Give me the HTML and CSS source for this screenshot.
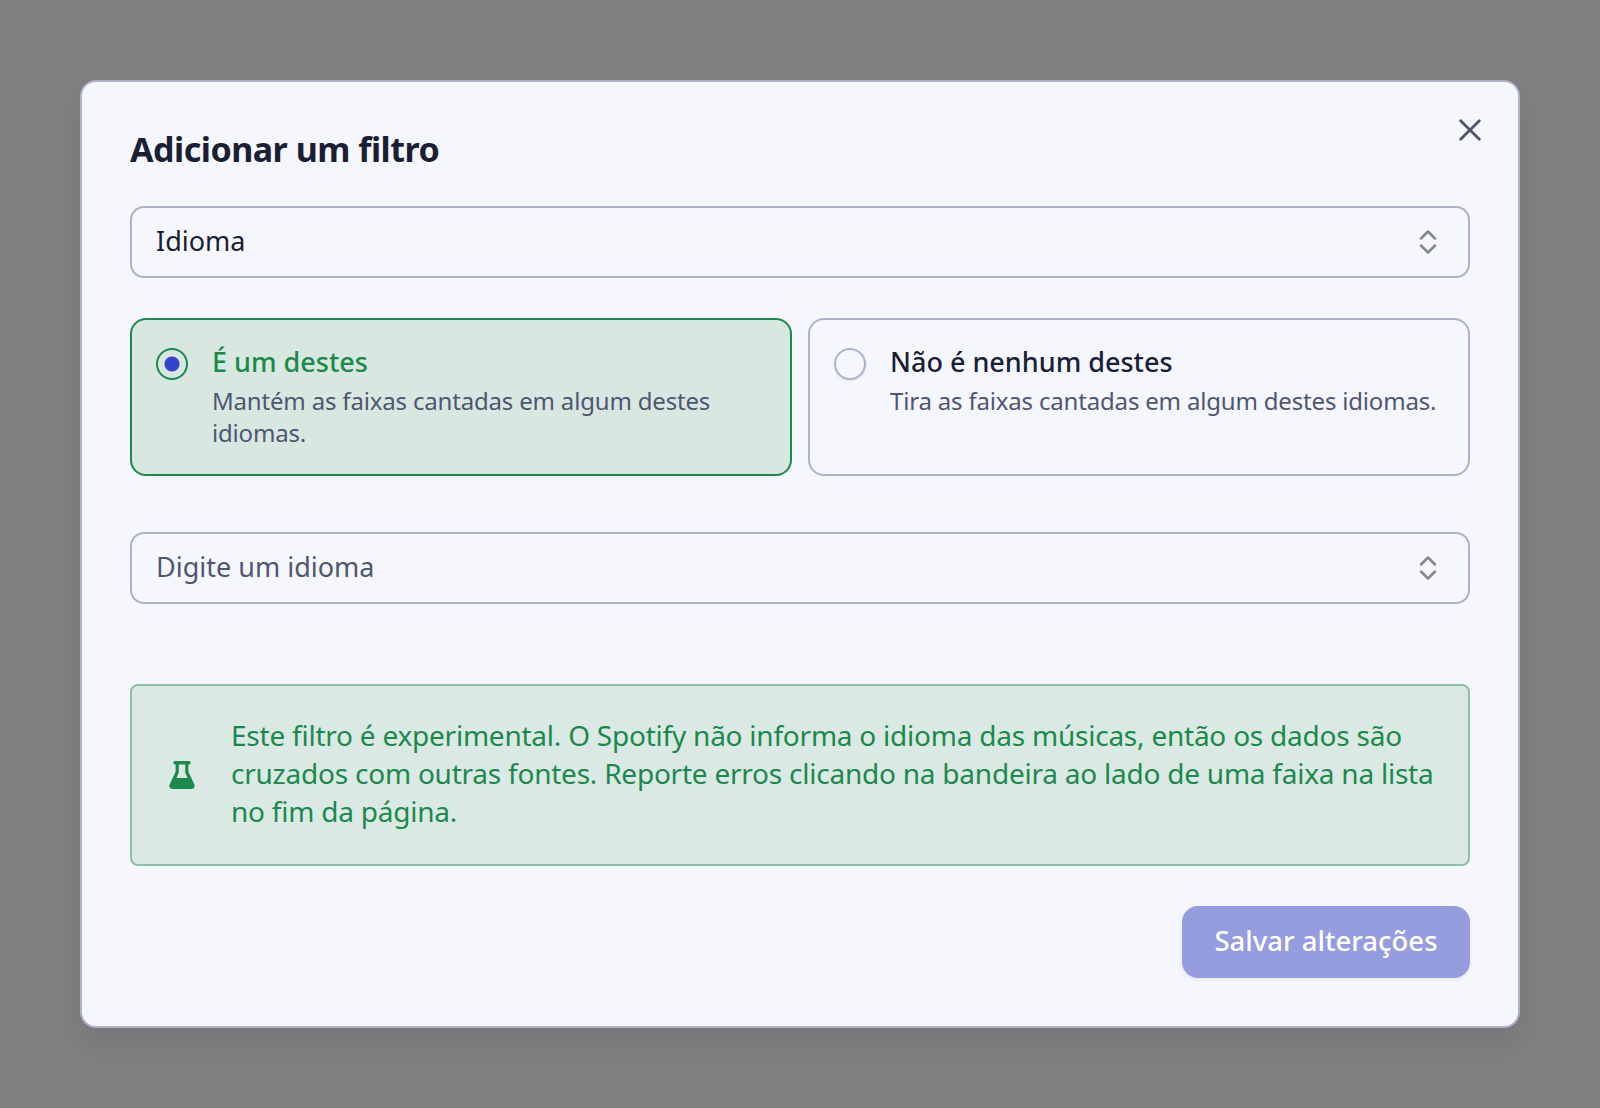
FILE: index.html
```html
<!DOCTYPE html>
<html lang="pt-BR">
<head>
  <meta charset="UTF-8" />
  <title>Adicionar um filtro</title>
  <link rel="stylesheet" href="styles.css">
</head>
<body>
  <div class="modal">
    <button class="fechar" aria-label="Fechar">
      <svg viewBox="0 0 24 24" width="28" height="28" fill="none" stroke="#4f5468" stroke-width="2.4" stroke-linecap="round"><path d="M4 4l16 16M20 4L4 20"/></svg>
    </button>
    <h2>Adicionar um filtro</h2>

    <div class="campo">
      <span>Idioma</span>
      <svg class="setas" viewBox="0 0 18 26" width="18" height="26" fill="none" stroke="#85878f" stroke-width="2.5" stroke-linecap="round" stroke-linejoin="round"><path d="M2 9.500l7-7 7 7M2 16.500l7 7 7-7"/></svg>
    </div>

    <div class="opcoes">
      <div class="opcao ativa">
        <span class="radio"></span>
        <div>
          <div class="opcao-titulo">É um destes</div>
          <div class="opcao-desc">Mantém as faixas cantadas em algum destes idiomas.</div>
        </div>
      </div>
      <div class="opcao">
        <span class="radio"></span>
        <div>
          <div class="opcao-titulo">Não é nenhum destes</div>
          <div class="opcao-desc">Tira as faixas cantadas em algum destes idiomas.</div>
        </div>
      </div>
    </div>

    <div class="campo campo-busca">
      <span>Digite um idioma</span>
      <svg class="setas" viewBox="0 0 18 26" width="18" height="26" fill="none" stroke="#85878f" stroke-width="2.5" stroke-linecap="round" stroke-linejoin="round"><path d="M2 9.500l7-7 7 7M2 16.500l7 7 7-7"/></svg>
    </div>

    <div class="aviso">
      <svg class="frasco" viewBox="0 0 26 28" width="26" height="28"><path fill="#1a8a4c" fill-rule="evenodd" d="M6 0h14a1.400 1.400 0 0 1 0 3.400h-.6v7.400l6 12.600c.9 2-.4 4.600-3 4.600H3.600c-2.600 0-3.900-2.600-3-4.600l6-12.600V3.400H6A1.400 1.400 0 0 1 6 0zm3.800 3.400v8.200L7.400 17h11.200l-2.400-5.400V3.400z"/></svg>
      <p>Este filtro é experimental. O Spotify não informa o idioma das músicas, então os dados são cruzados com outras fontes. Reporte erros clicando na bandeira ao lado de uma faixa na lista no fim da página.</p>
    </div>

    <div class="rodape">
      <button class="salvar">Salvar alterações</button>
    </div>
  </div>
</body>
</html>
```
FILE: styles.css
```css
* {
  box-sizing: border-box;
}
body {
  margin: 0;
  height: 1108px;
  background-color: #808082;
  font-family: "Noto Sans", sans-serif;
  display: flex;
  align-items: center;
  justify-content: center;
}
.modal {
  position: relative;
  width: 1440px;
  height: 948px;
  padding: 48px;
  background-color: #f5f7fc;
  border: 2px solid #aeb1c8;
  border-radius: 16px;
  box-shadow: 0 16px 32px rgba(0, 0, 0, 0.08);
}
.fechar {
  position: absolute;
  top: 34px;
  right: 34px;
  padding: 0;
  border: none;
  background: none;
  display: flex;
}
h2 {
  margin: 0 0 36px;
  padding-bottom: 2px;
  height: 40px;
  font-size: 34px;
  line-height: 38px;
  font-weight: 700;
  letter-spacing: -0.5px;
  color: #1a1f36;
}
.campo {
  height: 72px;
  padding: 0 31px 0 24px;
  display: flex;
  align-items: center;
  justify-content: space-between;
  border: 2px solid #aeb1c8;
  border-radius: 14px;
  font-size: 27px;
  color: #1a1f36;
}
.campo span {
  padding-bottom: 4px;
}
.campo-busca {
  margin-top: 56px;
  color: #4f5672;
}
.opcoes {
  margin-top: 40px;
  display: grid;
  grid-template-columns: 1fr 1fr;
  gap: 16px;
}
.opcao {
  height: 158px;
  padding: 24px;
  display: flex;
  gap: 24px;
  border: 2px solid #aeb1c8;
  border-radius: 16px;
}
.opcao.ativa {
  background-color: #d8e8e1;
  border-color: #1a8a4c;
}
.radio {
  flex: none;
  width: 32px;
  height: 32px;
  margin-top: 4px;
  border: 2px solid #aeb1c8;
  border-radius: 50%;
  box-shadow: 0 1px 2px rgba(0, 0, 0, 0.1);
}
.ativa .radio {
  border-color: #1a8a4c;
  background: radial-gradient(circle, #3344cc 0 7px, transparent 8px);
  box-shadow: none;
}
.opcao-titulo {
  font-size: 27px;
  line-height: 35px;
  font-weight: 500;
  color: #1a1f36;
}
.ativa .opcao-titulo {
  color: #1a8a4c;
}
.opcao-desc {
  margin-top: 6px;
  font-size: 24px;
  line-height: 32px;
  letter-spacing: -0.18px;
  color: #4f5672;
}
.aviso {
  margin-top: 80px;
  padding: 30px 24px 30px 37px;
  display: flex;
  align-items: center;
  gap: 36px;
  background-color: #dbe9e4;
  border: 2px solid #8cbfa3;
  border-radius: 8px;
  color: #1a8a4c;
}
.frasco {
  flex: none;
}
.aviso p {
  margin: 0;
  padding-bottom: 4px;
  font-size: 28px;
  line-height: 38px;
  letter-spacing: -0.23px;
}
.rodape {
  margin-top: 40px;
  display: flex;
  justify-content: flex-end;
}
.salvar {
  height: 72px;
  width: 288px;
  padding: 0 0 4px;
  border: none;
  border-radius: 16px;
  background-color: #959ddf;
  color: #fff;
  font-family: inherit;
  font-size: 27.500px;
  font-weight: 500;
  box-shadow: 0 2px 4px rgba(0, 0, 0, 0.06);
}
```
